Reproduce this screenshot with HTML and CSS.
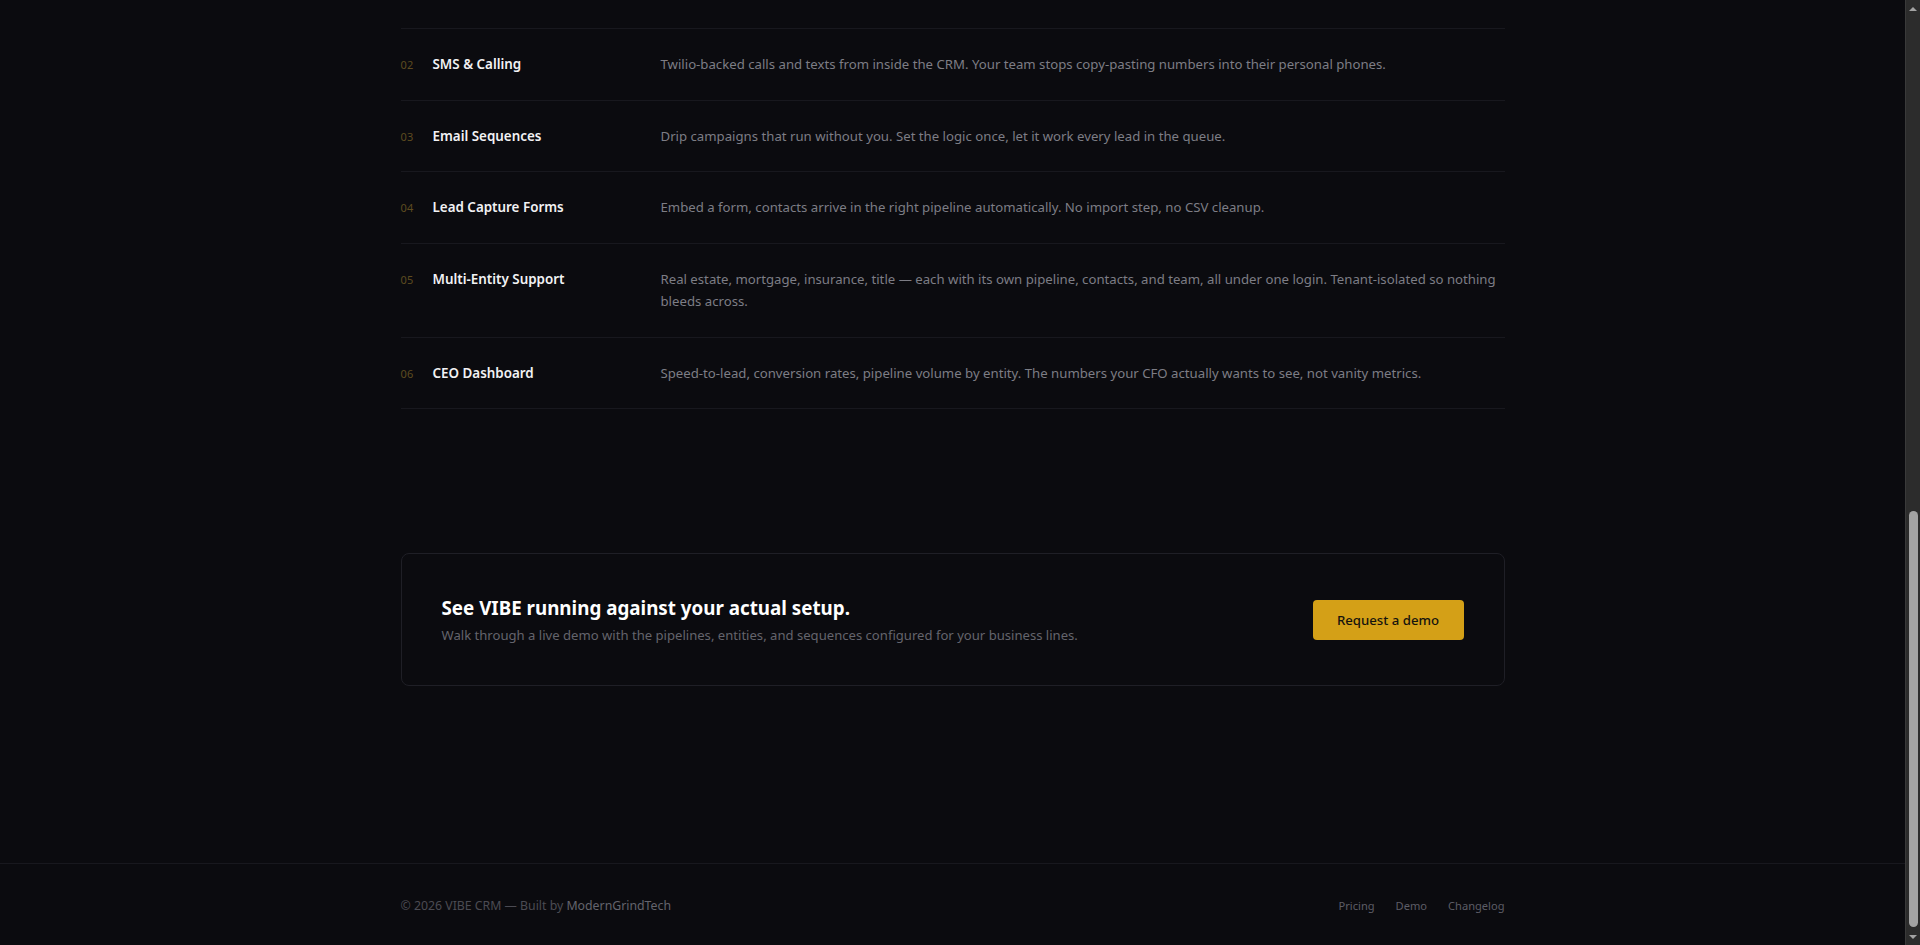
FILE: index.html
```html
<!DOCTYPE html>
<html lang="en">
<head>
<meta charset="utf-8">
<title>VIBE CRM</title>
<link rel="stylesheet" href="styles.css">
</head>
<body>
<div class="viewport">
  <div class="page">
    <section class="features">
      <div class="container">
        <div class="feature-list">
          <div class="feature-row">
            <span class="num">02</span>
            <h3 class="title">SMS &amp; Calling</h3>
            <p class="desc">Twilio-backed calls and texts from inside the CRM. Your team stops copy-pasting numbers into their personal phones.</p>
          </div>
          <div class="feature-row">
            <span class="num">03</span>
            <h3 class="title">Email Sequences</h3>
            <p class="desc">Drip campaigns that run without you. Set the logic once, let it work every lead in the queue.</p>
          </div>
          <div class="feature-row">
            <span class="num">04</span>
            <h3 class="title">Lead Capture Forms</h3>
            <p class="desc">Embed a form, contacts arrive in the right pipeline automatically. No import step, no CSV cleanup.</p>
          </div>
          <div class="feature-row">
            <span class="num">05</span>
            <h3 class="title">Multi-Entity Support</h3>
            <p class="desc">Real estate, mortgage, insurance, title — each with its own pipeline, contacts, and team, all under one login. Tenant-isolated so nothing bleeds across.</p>
          </div>
          <div class="feature-row">
            <span class="num">06</span>
            <h3 class="title">CEO Dashboard</h3>
            <p class="desc">Speed-to-lead, conversion rates, pipeline volume by entity. The numbers your CFO actually wants to see, not vanity metrics.</p>
          </div>
        </div>
      </div>
    </section>

    <section class="cta">
      <div class="container">
        <div class="cta-card">
          <div class="cta-text">
            <h2 class="cta-title">See VIBE running against your actual setup.</h2>
            <p class="cta-sub">Walk through a live demo with the pipelines, entities, and sequences configured for your business lines.</p>
          </div>
          <a class="btn" href="#">Request a demo</a>
        </div>
      </div>
    </section>

    <footer class="footer">
      <div class="container footer-inner">
        <p class="copyright">© 2026 VIBE CRM — Built by <a href="#">ModernGrindTech</a></p>
        <nav class="footer-links">
          <a href="#">Pricing</a>
          <a href="#">Demo</a>
          <a href="#">Changelog</a>
        </nav>
      </div>
    </footer>
  </div>

  <div class="scrollbar" aria-hidden="true">
    <div class="sb-btn"><span class="arrow-up"></span></div>
    <div class="sb-track"><div class="sb-thumb"></div></div>
    <div class="sb-btn"><span class="arrow-down"></span></div>
  </div>
</div>
</body>
</html>
```

FILE: styles.css
```css
* {
  box-sizing: border-box;
}

html, body {
  margin: 0;
  padding: 0;
  height: 945px;
  overflow: hidden;
  background: #0b0b0f;
}

body {
  font-family: "Noto Sans", "Open Sans", sans-serif;
  color: #e8e8ea;
  -webkit-font-smoothing: antialiased;
}

.viewport {
  display: flex;
  height: 945px;
}

.page {
  flex: 1;
  min-width: 0;
  background: #0b0b0f;
}

.container {
  max-width: 1152px;
  margin: 0 auto;
  padding: 0 24px;
}

/* Features */
.features {
  padding-top: 28px;
  padding-bottom: 96px;
}

.feature-list {
  border-top: 1px solid #18181e;
}

.feature-row {
  display: grid;
  grid-template-columns: 32px 228px 1fr;
  align-items: baseline;
  padding: 24px 0;
  border-bottom: 1px solid #18181e;
}

.num {
  font-size: 11px;
  line-height: 12px;
  color: #5e4b20;
  letter-spacing: 0.02em;
}

.title {
  margin: 0;
  font-size: 13.4px;
  font-weight: 600;
  line-height: 22px;
  color: #f2f2f4;
}

.desc {
  margin: 0;
  font-size: 13.2px;
  line-height: 22.5px;
  color: #7d7d85;
}

/* CTA */
.cta {
  padding-top: 48px;
}

.cta-card {
  display: flex;
  align-items: center;
  justify-content: space-between;
  padding: 40px;
  border: 1px solid #1f1f26;
  border-radius: 8px;
  background: #0b0b0f;
}

.cta-title {
  margin: 0;
  font-size: 18.8px;
  line-height: 28px;
  font-weight: 700;
  color: #ffffff;
}

.cta-sub {
  margin: 3px 0 0;
  font-size: 13.1px;
  line-height: 20px;
  color: #64646c;
}

.btn {
  display: inline-flex;
  align-items: center;
  justify-content: center;
  width: 151px;
  height: 40px;
  border-radius: 4px;
  background: #d4a017;
  color: #15130e;
  font-size: 13.2px;
  font-weight: 500;
  text-decoration: none;
}

/* Footer */
.footer {
  margin-top: 177px;
  border-top: 1px solid #18181e;
  padding: 32px 0;
}

.footer-inner {
  display: flex;
  align-items: center;
  justify-content: space-between;
}

.copyright {
  margin: 0;
  font-size: 12.3px;
  line-height: 20px;
  color: #4b4b53;
}

.copyright a {
  color: #64646d;
  text-decoration: none;
}

.footer-links {
  display: flex;
  gap: 21px;
}

.footer-links a {
  font-size: 11.1px;
  line-height: 20px;
  color: #5d5d66;
  text-decoration: none;
}

/* Browser scrollbar (page is scrolled to the bottom) */
.scrollbar {
  width: 15px;
  display: flex;
  flex-direction: column;
  background: #2c2c2c;
  border-left: 1px solid #3a3a3a;
}

.sb-btn {
  height: 17px;
  display: flex;
  align-items: center;
  justify-content: center;
}

.arrow-up {
  width: 0;
  height: 0;
  border-left: 4px solid transparent;
  border-right: 4px solid transparent;
  border-bottom: 4px solid #a3a3a3;
}

.arrow-down {
  width: 0;
  height: 0;
  border-left: 4px solid transparent;
  border-right: 4px solid transparent;
  border-top: 4px solid #a3a3a3;
}

.sb-track {
  flex: 1;
  display: flex;
  flex-direction: column;
  justify-content: flex-end;
  align-items: center;
  padding-bottom: 1px;
}

.sb-thumb {
  width: 9px;
  height: 416px;
  border-radius: 5px;
  background: #a3a3a3;
}
```
